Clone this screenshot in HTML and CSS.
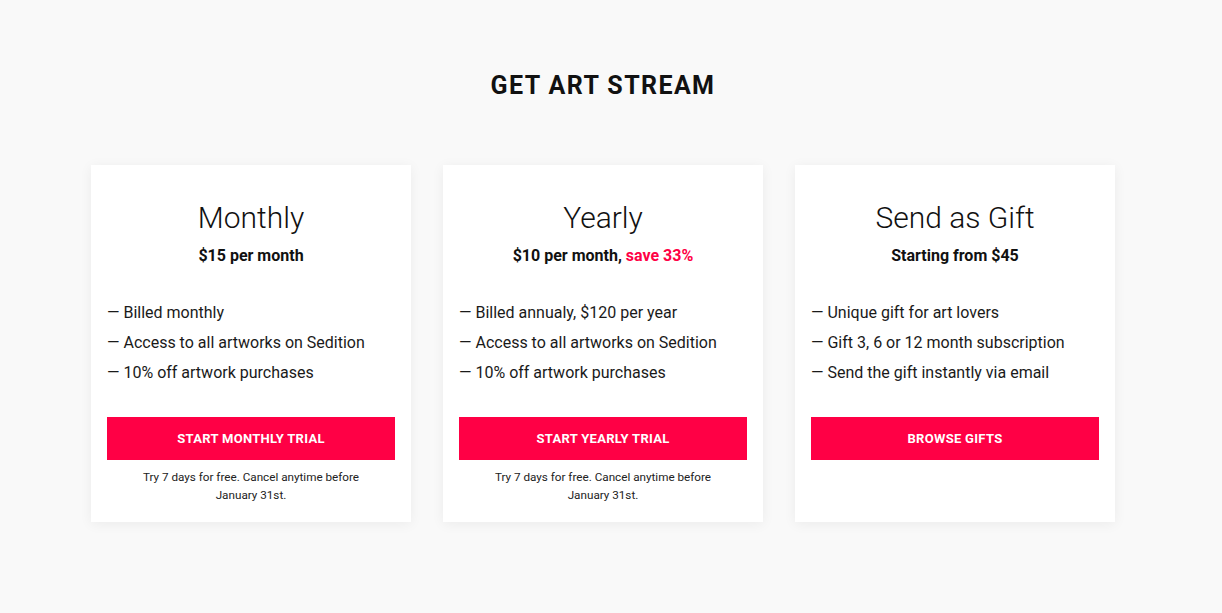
FILE: index.html
```html
<!DOCTYPE html>
<html>

<head>
    <title>Get Art Stream</title>
    <meta name="viewport" content="width=device-width, initial-scale=1.0">
    <link rel="stylesheet" href="styles.css">
</head>

<body>
    <div class="page">
        <h1 class="page-title">GET ART STREAM</h1>

        <div class="plans">
            <div class="plan">
                <h2 class="plan-name">Monthly</h2>
                <p class="plan-price">$15 per month</p>
                <ul class="plan-features">
                    <li>— Billed monthly</li>
                    <li>— Access to all artworks on Sedition</li>
                    <li>— 10% off artwork purchases</li>
                </ul>
                <button class="plan-button">Start monthly trial</button>
                <p class="plan-note">Try 7 days for free. Cancel anytime before January 31st.</p>
            </div>

            <div class="plan">
                <h2 class="plan-name">Yearly</h2>
                <p class="plan-price">$10 per month, <span class="save">save 33%</span></p>
                <ul class="plan-features">
                    <li>— Billed annualy, $120 per year</li>
                    <li>— Access to all artworks on Sedition</li>
                    <li>— 10% off artwork purchases</li>
                </ul>
                <button class="plan-button">Start yearly trial</button>
                <p class="plan-note">Try 7 days for free. Cancel anytime before January 31st.</p>
            </div>

            <div class="plan">
                <h2 class="plan-name">Send as Gift</h2>
                <p class="plan-price">Starting from $45</p>
                <ul class="plan-features">
                    <li>— Unique gift for art lovers</li>
                    <li>— Gift 3, 6 or 12 month subscription</li>
                    <li>— Send the gift instantly via email</li>
                </ul>
                <button class="plan-button">Browse gifts</button>
            </div>
        </div>
    </div>
</body>

</html>
```

FILE: styles.css
```css
html,
body {
    margin: 0;
    height: 100%;
    font-family: Roboto, "Liberation Sans", sans-serif;
    background: #f9f9f9;
    color: #111;
}

.page {
    width: 1206px;
    padding-top: 69px;
}

.page-title {
    margin: 0;
    text-align: center;
    font-size: 25px;
    font-weight: 700;
    letter-spacing: 1.4px;
    line-height: 34px;
}

.plans {
    display: flex;
    justify-content: center;
    gap: 32px;
    margin-top: 62px;
}

.plan {
    width: 320px;
    box-sizing: border-box;
    padding: 34px 16px 18px;
    background: #fff;
    box-shadow: 0 2px 12px rgba(0, 0, 0, 0.06);
    text-align: center;
}

.plan-name {
    margin: 0;
    font-size: 30px;
    font-weight: 300;
    line-height: 38px;
}

.plan-price {
    margin: 9px 0 0;
    font-size: 16px;
    font-weight: 700;
    line-height: 20px;
}

.save {
    color: #ff0045;
}

.plan-features {
    list-style: none;
    margin: 32px 0 0;
    padding: 0;
    text-align: left;
    font-size: 16px;
    line-height: 30px;
    color: #1a1a1a;
}

.plan-button {
    display: block;
    width: 100%;
    height: 43px;
    margin-top: 29px;
    border: none;
    background: #ff0045;
    color: #fff;
    font-family: inherit;
    font-size: 13px;
    font-weight: 700;
    text-transform: uppercase;
    letter-spacing: 0.3px;
    cursor: pointer;
}

.plan-note {
    margin: 8px auto 0;
    width: 236px;
    font-size: 11.7px;
    line-height: 18px;
    color: #222;
}
```
